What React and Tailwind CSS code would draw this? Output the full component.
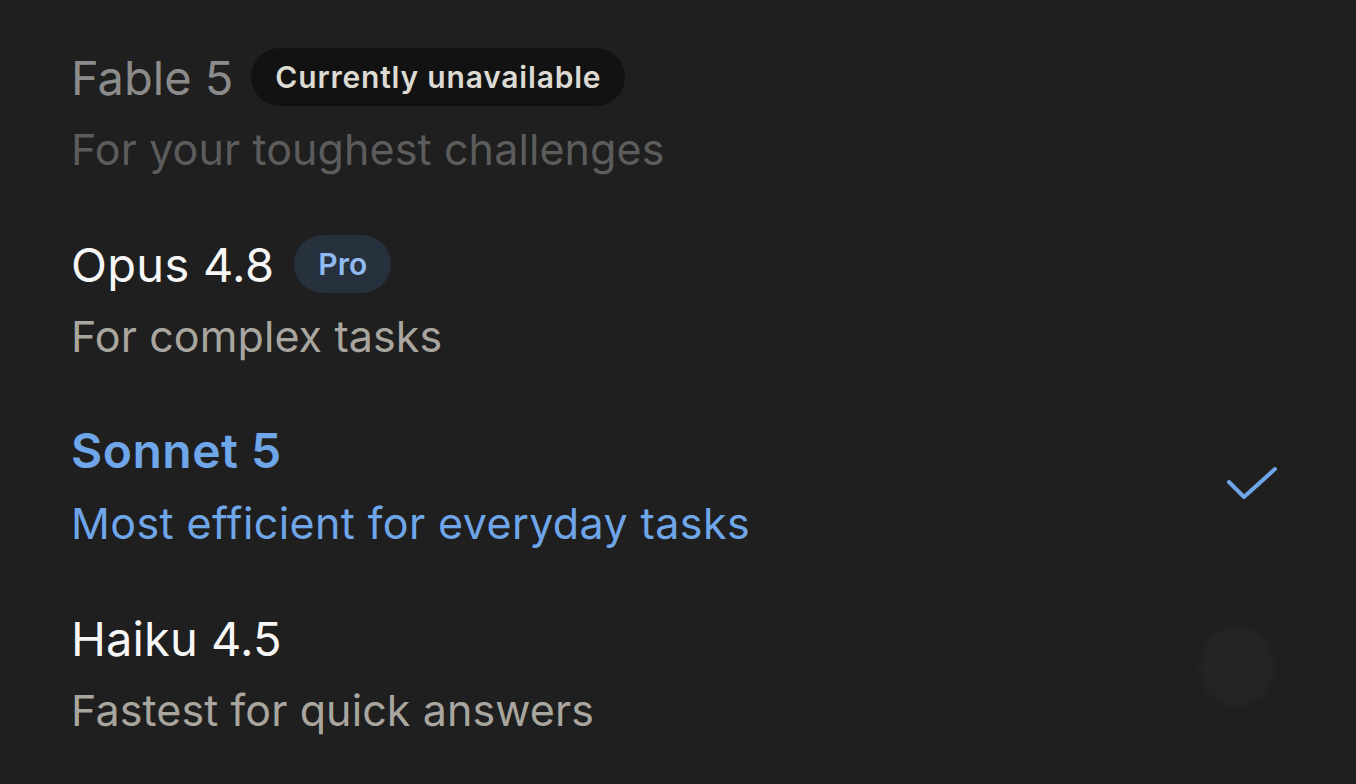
export default function App() {
  const font = { fontFamily: 'Inter, "Noto Sans", sans-serif' };
  return (
    <div className="w-[1356px] h-[784px] bg-[#1f1f1f] overflow-hidden relative" style={font}>
      <div className="flex flex-col pl-[71px] pr-[78px] pt-[44px]">
        {/* Fable 5 */}
        <div className="h-[187px] flex flex-col">
          <div className="flex items-center gap-[18px] h-[66px]">
            <span className="text-[47px] leading-none text-[#8b8b8b]">Fable 5</span>
            <span className="h-[58px] px-[24px] rounded-full bg-[#121212] flex items-center text-[30px] font-semibold tracking-[0.8px] text-[#dcdad2]">Currently unavailable</span>
          </div>
          <span className="text-[43px] leading-none mt-[18px] text-[#5c5c5c] tracking-[0.1px]">For your toughest challenges</span>
        </div>
        {/* Opus */}
        <div className="h-[187px] flex flex-col">
          <div className="flex items-center gap-[20px] h-[66px]">
            <span className="text-[47px] leading-none text-[#f6f6f6] tracking-[0.3px]">Opus 4.8</span>
            <span className="h-[58px] px-[24px] rounded-full bg-[#27303d] flex items-center text-[30px] font-semibold text-[#91baf0]">Pro</span>
          </div>
          <span className="text-[43px] leading-none mt-[18px] text-[#a9a69f] tracking-[0.1px]">For complex tasks</span>
        </div>
        {/* Sonnet */}
        <div className="h-[187px] flex items-start justify-between">
          <div className="flex flex-col">
            <div className="flex items-center h-[66px]">
              <span className="text-[48px] leading-none font-semibold text-[#6fa6e9] tracking-[0.5px]">Sonnet 5</span>
            </div>
            <span className="text-[43px] leading-none mt-[18px] text-[#6fa6e9] tracking-[0.4px]">Most efficient for everyday tasks</span>
          </div>
          <svg width="52" height="38" viewBox="0 0 52 38" className="mt-[48px]">
            <path d="M3 16 L18 31 L49 3" fill="none" stroke="#6fa6e9" strokeWidth="4" strokeLinecap="round" strokeLinejoin="round" />
          </svg>
        </div>
        {/* Haiku */}
        <div className="h-[187px] flex items-start justify-between">
          <div className="flex flex-col">
            <div className="flex items-center h-[66px]">
              <span className="text-[47px] leading-none text-[#f6f6f6] tracking-[0.1px]">Haiku 4.5</span>
            </div>
            <span className="text-[43px] leading-none mt-[18px] text-[#a9a69f] tracking-[0.1px]">Fastest for quick answers</span>
          </div>
          <div className="w-[74px] h-[80px] rounded-full bg-[#242424] mt-[22px] mr-[4px] blur-[3px]" />
        </div>
      </div>
    </div>
  );
}
